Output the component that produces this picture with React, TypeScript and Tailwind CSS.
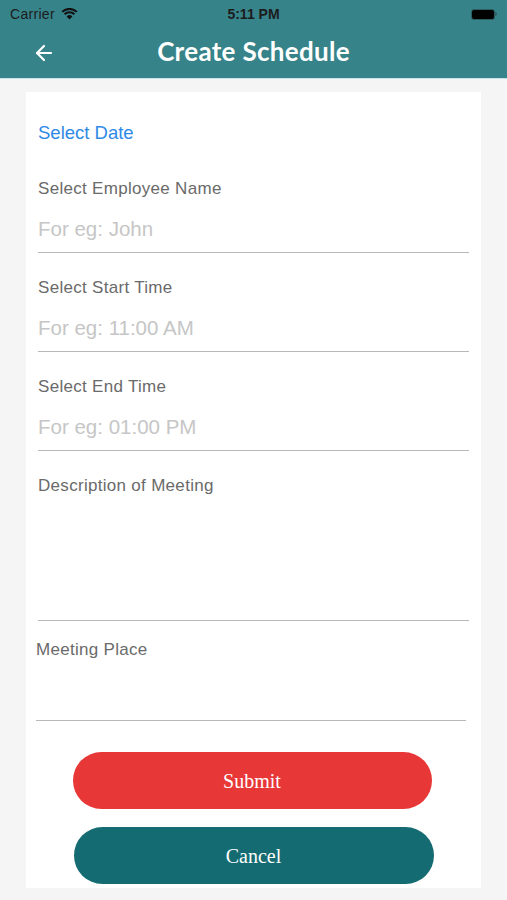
import { ArrowLeft } from 'lucide-react';

const sans = { fontFamily: '"Liberation Sans", Arial, sans-serif' };

function Field({ label, placeholder }: { label: string; placeholder: string }) {
  return (
    <div className="mt-[25px] border-b border-[#b8b8b8] pb-[11px]">
      <div className="text-[17px] leading-[20px] tracking-[0.3px] text-[#6a6a6a]">{label}</div>
      <div className="mt-[18px] text-[20.5px] leading-[24px] text-[#c6c6c6]">{placeholder}</div>
    </div>
  );
}

export default function App() {
  return (
    <div className="min-h-[900px] w-full bg-[#f5f5f5] flex flex-col" style={sans}>
      {/* header */}
      <div className="bg-[#37838a] border-b border-[#c6e2ea] h-[79px] flex flex-col">
        <div className="h-[28px] px-[10px] flex items-center justify-between text-[#1c1c1c]">
          <div className="flex items-center gap-[6px] w-[120px]">
            <span className="text-[14px] tracking-[0.3px]">Carrier</span>
            <svg width="17" height="12" viewBox="0 0 17 12">
              <path d="M8.5 11.5 L5.6 8.4 A4.2 4.2 0 0 1 11.4 8.4 Z" fill="#111" />
              <path d="M3.6 6.3 A7 7 0 0 1 13.4 6.3" stroke="#111" strokeWidth="2" fill="none" />
              <path d="M1.2 3.9 A10.4 10.4 0 0 1 15.8 3.9" stroke="#111" strokeWidth="2" fill="none" />
            </svg>
          </div>
          <span className="text-[14px] font-bold">5:11 PM</span>
          <div className="w-[120px] flex justify-end">
            <div className="flex items-center">
              <div className="w-[24px] h-[11px] rounded-[3px] bg-black border border-[#2d5e62]" />
              <div className="w-[2px] h-[4px] bg-[#2d5e62] rounded-r-sm" />
            </div>
          </div>
        </div>
        <div className="flex-1 relative flex items-center justify-center">
          <ArrowLeft className="absolute left-[32px] text-white" size={24} strokeWidth={2.2} />
          <span
            className="text-white text-[26px] font-bold tracking-[0.3px] -mt-[4px]"
            style={{ fontFamily: 'Lato, "Open Sans", sans-serif' }}
          >
            Create Schedule
          </span>
        </div>
      </div>

      {/* form card */}
      <div className="mt-[13px] mx-[26px] bg-white px-[12px] pt-[30px] pb-[4px] flex flex-col">
        <div className="text-[18.5px] leading-[22px] text-[#2e8ae6]">Select Date</div>
        <div className="mt-[10px]" />
        <Field label="Select Employee Name" placeholder="For eg: John" />
        <Field label="Select Start Time" placeholder="For eg: 11:00 AM" />
        <Field label="Select End Time" placeholder="For eg: 01:00 PM" />
        <div className="mt-[25px] h-[145px] border-b border-[#b8b8b8]">
          <div className="text-[17px] leading-[20px] tracking-[0.3px] text-[#6a6a6a]">
            Description of Meeting
          </div>
        </div>
        <div className="mt-[19px] ml-[-2px] mr-[3px] h-[81px] border-b border-[#b8b8b8]">
          <div className="text-[17px] leading-[20px] tracking-[0.3px] text-[#6a6a6a]">Meeting Place</div>
        </div>
        <div
          className="mt-[31px] flex flex-col items-center gap-[18px]"
          style={{ fontFamily: '"Liberation Serif", "Times New Roman", serif' }}
        >
          <button className="ml-[-3px] w-[359px] h-[57px] rounded-full bg-[#e83737] text-white text-[20px]">
            Submit
          </button>
          <button className="w-[360px] h-[57px] rounded-full bg-[#156b72] text-white text-[20px]">
            Cancel
          </button>
        </div>
      </div>
    </div>
  );
}
